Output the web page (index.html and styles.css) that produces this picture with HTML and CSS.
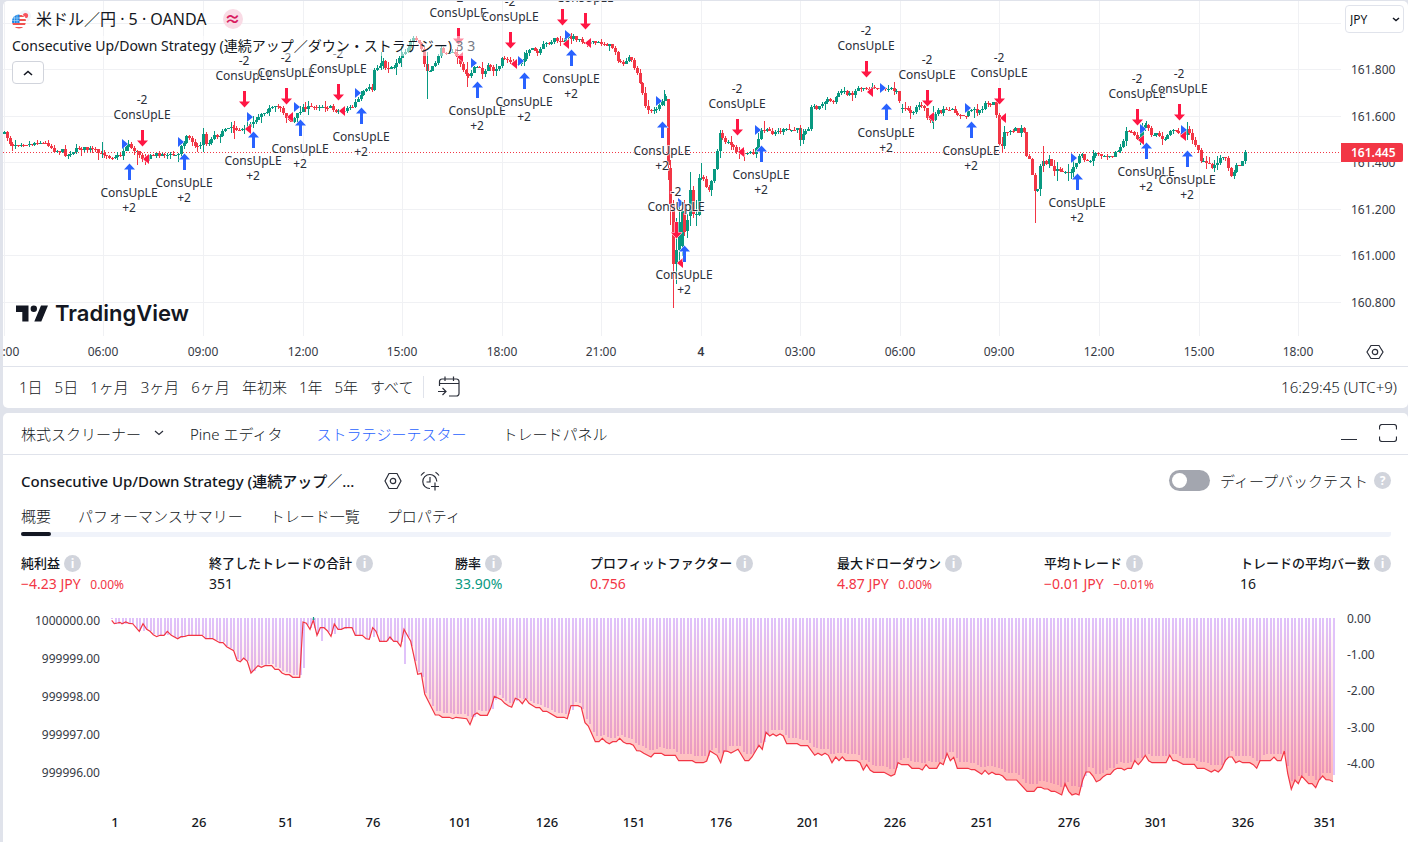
FILE: index.html
```html
<!DOCTYPE html>
<html lang="ja">
<head>
<meta charset="utf-8">
<title>米ドル／円 · 5 · OANDA</title>
<meta name="viewport" content="width=device-width, initial-scale=1">
<link rel="stylesheet" href="styles.css">
</head>
<body>
<main class="app">
  <section class="panel chart-panel">
    <div class="chart">
      <svg class="plot" id="price-plot" viewBox="3 1 1405 365" role="img" aria-label="米ドル／円 5分足"></svg>

      <div class="legend">
        <div class="symbol">
          <svg class="flags" viewBox="0 0 20 20" aria-hidden="true">
            <circle cx="13" cy="7" r="6" fill="#f0f3fa"/>
            <circle cx="13.500" cy="6.500" r="2.600" fill="#f7525f"/>
            <clipPath id="us"><circle cx="7" cy="12.500" r="7"/></clipPath>
            <circle cx="7" cy="12.500" r="7.600" fill="#fff"/>
            <g clip-path="url(#us)">
              <path fill="#fff" d="M0 5h15v15H0z"/>
              <path fill="#ef5350" d="M7 6h8v2H7zM7 10h8v2H7zM0 14h15v2H0zM0 18h15v2H0z"/>
              <path fill="#1e88e5" d="M0 5h7.500v9H0z"/>
              <path stroke="#bbdefb" stroke-width=".6" d="M2.500 6v8M5 6v8M0 9h7M0 11.500h7"/>
            </g>
          </svg>
          <h1 class="symbol-name">米ドル／円 · 5 · OANDA</h1>
          <span class="approx">≈</span>
        </div>
        <div class="study">Consecutive Up/Down Strategy (連続アップ／ダウン・ストラテジー) <span class="study-args">3 3</span></div>
        <button class="collapse" type="button" aria-label="閉じる">
          <svg viewBox="0 0 10 6" width="10" height="6" aria-hidden="true"><path d="M1 5l4-3.500L9 5" fill="none" stroke="#131722" stroke-width="1.600"/></svg>
        </button>
      </div>

      <div class="currency">
        <select aria-label="通貨"><option>JPY</option></select>
        <svg viewBox="0 0 8 5" width="8" height="5" aria-hidden="true"><path d="M1 1l3 2.500L7 1" fill="none" stroke="#131722" stroke-width="1.500"/></svg>
      </div>

      <a class="brand" href="#">
        <svg viewBox="0 0 32 17" width="32" height="17" aria-hidden="true"><path fill="#131722" d="M0 .5h12.500v16H6.300V7H0zM32 .5l-6.700 16h-7L25 .5zM17.800 .5a3.200 3.200 0 1 1 0 6.400 3.200 3.200 0 0 1 0-6.400z"/></svg>
        <span>TradingView</span>
      </a>

      <button class="icon-button axis-settings" type="button" aria-label="スケール設定">
        <svg viewBox="0 0 18 18" width="18" height="18" aria-hidden="true"><path d="M5 2.500h8L17 9l-4 6.500H5L1 9z" class="line"/><circle cx="9" cy="9" r="2.700" class="line"/></svg>
      </button>
    </div>

    <div class="range-bar">
      <div class="ranges">
        <button type="button">1日</button>
        <button type="button">5日</button>
        <button type="button">1ヶ月</button>
        <button type="button">3ヶ月</button>
        <button type="button">6ヶ月</button>
        <button type="button">年初来</button>
        <button type="button">1年</button>
        <button type="button">5年</button>
        <button type="button">すべて</button>
      </div>
      <button class="icon-button goto" type="button" aria-label="日付へ移動">
        <svg viewBox="0 0 22 22" width="22" height="22" aria-hidden="true"><path class="line" d="M1.500 10V5.500a2.500 2.500 0 0 1 2.500-2.500h14.500A2.500 2.500 0 0 1 21 5.500v12a2.500 2.500 0 0 1-2.500 2.500H11M1.500 7.500H21M7 .5V5M15.500 .5V5M0 15.500h7.500M4.500 12l3.500 3.500L4.500 19"/></svg>
      </button>
      <time class="clock">16:29:45 (UTC+9)</time>
    </div>
  </section>

  <section class="panel tester">
    <nav class="dock">
      <button class="dock-tab screener" type="button">株式スクリーナー
        <svg viewBox="0 0 10 6" width="10" height="6" aria-hidden="true"><path d="M1 1l4 3.500L9 1" class="line"/></svg>
      </button>
      <button class="dock-tab pine" type="button">Pine エディタ</button>
      <button class="dock-tab strategy active" type="button">ストラテジーテスター</button>
      <button class="dock-tab" type="button">トレードパネル</button>
      <div class="window-actions">
        <button class="icon-button" type="button" aria-label="最小化"><svg viewBox="0 0 18 18" width="18" height="18" aria-hidden="true"><path class="line" d="M1 15.500h16"/></svg></button>
        <button class="icon-button" type="button" aria-label="最大化"><svg viewBox="0 0 18 18" width="18" height="18" aria-hidden="true"><path class="line" d="M.5 5.500V3A2.500 2.500 0 0 1 3 .5h12A2.500 2.500 0 0 1 17.500 3v2.500M.5 12.500V15A2.500 2.500 0 0 0 3 17.500h12a2.500 2.500 0 0 0 2.500-2.500v-2.500"/></svg></button>
      </div>
    </nav>

    <header class="tester-head">
      <h2>Consecutive Up/Down Strategy (連続アップ／...</h2>
      <button class="icon-button" type="button" aria-label="設定">
        <svg viewBox="0 0 18 18" width="18" height="18" aria-hidden="true"><path d="M5 1.500h8L17 9l-4 7.500H5L1 9z" class="line"/><circle cx="9" cy="9" r="2.700" class="line"/></svg>
      </button>
      <button class="icon-button" type="button" aria-label="アラートを追加">
        <svg viewBox="0 0 20 20" width="20" height="20" aria-hidden="true"><path class="line" d="M16.800 10.500A7 7 0 1 0 10 17.500M10 6v5H6.500M1 4.500C2 3 3 2 4.500 1.200M19 4.500c-1-1.500-2-2.500-3.500-3.300M15 11.500v8M11 15.500h8"/></svg>
      </button>
      <div class="deep">
        <input class="toggle" type="checkbox" id="deep-test">
        <label for="deep-test">ディープバックテスト</label>
        <span class="badge">?</span>
      </div>
    </header>

    <nav class="views">
      <button class="active" type="button">概要</button>
      <button type="button">パフォーマンスサマリー</button>
      <button type="button">トレード一覧</button>
      <button type="button">プロパティ</button>
    </nav>

    <dl class="metrics">
      <div><dt>純利益 <span class="badge">i</span></dt><dd class="down">−4.23 JPY <small>0.00%</small></dd></div>
      <div><dt>終了したトレードの合計 <span class="badge">i</span></dt><dd>351</dd></div>
      <div><dt>勝率 <span class="badge">i</span></dt><dd class="up">33.90%</dd></div>
      <div><dt>プロフィットファクター <span class="badge">i</span></dt><dd class="down">0.756</dd></div>
      <div><dt>最大ドローダウン <span class="badge">i</span></dt><dd class="down">4.87 JPY <small>0.00%</small></dd></div>
      <div><dt>平均トレード <span class="badge">i</span></dt><dd class="down">−0.01 JPY <small>−0.01%</small></dd></div>
      <div><dt>トレードの平均バー数 <span class="badge">i</span></dt><dd>16</dd></div>
    </dl>

    <svg class="plot" id="equity-plot" viewBox="3 600 1405 242" role="img" aria-label="資産曲線とドローダウン"></svg>
  </section>
</main>
<script src="charts.js"></script>
</body>
</html>
```
FILE: styles.css
```css
* {
  box-sizing: border-box;
}

body {
  margin: 0;
  background: #e0e3eb;
  color: #131722;
  font-family: "Noto Sans", "Noto Sans CJK JP", sans-serif;
  font-size: 14px;
}

button {
  padding: 0;
  border: 0;
  background: none;
  color: inherit;
  font: inherit;
  white-space: nowrap;
  cursor: pointer;
}

.app {
  display: flex;
  flex-direction: column;
  gap: 5px;
  min-height: 100vh;
  padding: 1px 0 0 3px;
}

.panel {
  background: #fff;
  border-radius: 5px;
  overflow: hidden;
}

.tester {
  flex: 1;
  border-radius: 5px 5px 0 0;
}

.plot {
  display: block;
  width: 100%;
  height: auto;
}

.line {
  fill: none;
  stroke: #2a2e39;
  stroke-width: 1.2px;
}

.icon-button {
  display: flex;
  align-items: center;
}

/* price chart */

.chart {
  position: relative;
  border-bottom: 1px solid #e0e3eb;
}

.legend {
  position: absolute;
  top: 7px;
  left: 9px;
}

.symbol {
  display: flex;
  align-items: center;
  height: 22px;
}

.flags {
  width: 20px;
  height: 20px;
}

.symbol-name {
  margin: 0 16px 0 4px;
  font-size: 16px;
  font-weight: 400;
  line-height: 22px;
}

.approx {
  width: 20px;
  height: 20px;
  border-radius: 50%;
  background: #f9dbe5;
  color: #d81b60;
  font-size: 16px;
  font-weight: 700;
  line-height: 20px;
  text-align: center;
}

.study {
  margin-top: 6px;
  padding-right: 4px;
  background: rgb(255 255 255 / 50%);
  font-size: 14px;
  line-height: 20px;
  white-space: nowrap;
}

.study-args {
  color: #787b86;
}

.collapse {
  display: flex;
  align-items: center;
  justify-content: center;
  width: 32px;
  height: 23px;
  margin-top: 5px;
  border: 1px solid #d1d4dc;
  border-radius: 4px;
  background: #fff;
}

.currency {
  position: absolute;
  top: 4px;
  right: 4px;
  display: grid;
  align-items: center;
  width: 59px;
  height: 28px;
}

.currency > * {
  grid-area: 1 / 1;
}

.currency svg {
  justify-self: end;
  margin-right: 4px;
  pointer-events: none;
}

.currency select {
  appearance: none;
  width: 100%;
  height: 100%;
  padding: 0 4px;
  border: 1px solid #e0e3eb;
  border-radius: 4px;
  background: #fff;
  color: #131722;
  font-family: inherit;
  font-size: 12px;
}

.brand {
  position: absolute;
  bottom: 40px;
  left: 13px;
  display: flex;
  align-items: center;
  gap: 7px;
  color: #131722;
  font-family: Inter, sans-serif;
  font-size: 22px;
  font-weight: 600;
  line-height: 26px;
  text-decoration: none;
}

.axis-settings {
  position: absolute;
  right: 24px;
  bottom: 5px;
}

.grid {
  stroke: #f0f1f4;
}

.price-line {
  stroke: #f23645;
  stroke-dasharray: 1 2;
}

.axis {
  fill: #363a45;
  font-size: 12px;
}

.middle {
  text-anchor: middle;
}

.end {
  text-anchor: end;
}

.strong {
  font-weight: 600;
}

.tag {
  fill: #f23645;
}

.tag-text {
  fill: #fff;
  font-size: 12px;
  font-weight: 600;
}

.rise {
  fill: #089981;
}

.fall {
  fill: #f23645;
}

.buy {
  fill: #2962ff;
}

.sell {
  fill: #ff1744;
}

.marker {
  stroke: #fff;
  stroke-width: 1px;
  paint-order: stroke;
}

.order {
  fill: #2a2e39;
  stroke: rgb(255 255 255 / 70%);
  stroke-width: 2px;
  paint-order: stroke;
  font-size: 12px;
  text-anchor: middle;
}

/* date ranges */

.range-bar {
  display: flex;
  align-items: center;
  height: 41px;
  padding: 0 11px 2px 16px;
}

.ranges {
  display: flex;
  gap: 13px;
  padding-right: 11px;
  border-right: 1px solid #e0e3eb;
  font-size: 15px;
  font-weight: 300;
  line-height: 22px;
}

.ranges button {
  font-size: 15px;
  margin-right: -1px;
}

.goto {
  margin-left: 14px;
}

.clock {
  margin-left: auto;
  font-size: 15px;
  font-weight: 300;
}

/* strategy tester */

.dock {
  display: flex;
  align-items: center;
  height: 42px;
  padding: 0 11px 1px 18px;
  border-bottom: 1px solid #e0e3eb;
  font-size: 15px;
  font-weight: 300;
}

.screener {
  display: flex;
  align-items: center;
  gap: 13px;
  margin-right: 26px;
}

.pine {
  margin-right: 34px;
}

.strategy {
  margin-right: 36px;
}

.dock .active {
  color: #2962ff;
}

.window-actions {
  display: flex;
  gap: 21px;
  margin-left: auto;
}

.tester-head {
  display: flex;
  align-items: center;
  gap: 18px;
  height: 51px;
  padding: 0 17px 0 18px;
}

.tester-head h2 {
  margin: 0 12px 0 0;
  font-size: 15px;
  font-weight: 500;
  white-space: nowrap;
}

.deep {
  display: flex;
  align-items: center;
  margin-left: auto;
  font-size: 15px;
  font-weight: 300;
  white-space: nowrap;
}

.deep label {
  margin: 0 6px 0 10px;
}

.toggle {
  appearance: none;
  display: flex;
  align-items: center;
  width: 41px;
  height: 21px;
  margin: 0;
  padding: 3px;
  border-radius: 11px;
  background: #a3a6af;
}

.toggle::before {
  content: "";
  width: 15px;
  height: 15px;
  border-radius: 50%;
  background: #fff;
}

.toggle:checked {
  justify-content: flex-end;
  background: #2962ff;
}

.badge {
  flex: none;
  width: 17px;
  height: 17px;
  border-radius: 50%;
  background: #d1d4dc;
  color: #fff;
  font-size: 12px;
  font-weight: 700;
  line-height: 17px;
  text-align: center;
}

.views {
  display: flex;
  gap: 27px;
  margin: 0 17px 0 18px;
  border-radius: 3px;
  background: linear-gradient(#f0f3fa, #f0f3fa) bottom / 100% 5px no-repeat;
  font-size: 15px;
  font-weight: 300;
}

.views button {
  position: relative;
  padding-bottom: 11px;
  line-height: 20px;
}

.views .active::after {
  content: "";
  position: absolute;
  right: 0;
  bottom: 1px;
  left: 0;
  height: 4px;
  border-radius: 2px;
  background: #131722;
}

.metrics {
  display: grid;
  grid-template-columns: 188fr 246fr 135fr 247fr 207fr 196fr 151fr;
  margin: 0 17px 0 18px;
  padding: 16px 0 4px;
  white-space: nowrap;
}

.metrics dt {
  display: flex;
  align-items: center;
  gap: 4px;
  font-size: 13px;
  font-weight: 500;
  line-height: 20px;
}

.metrics dd {
  margin: 0;
  font-size: 14px;
  line-height: 22px;
}

.metrics small {
  margin-left: 6px;
  font-size: 12px;
}

.metrics .down {
  color: #f23645;
}

.metrics .up {
  color: #089981;
}

.drawdown {
  fill: #e0c2fa;
}

.equity {
  fill: none;
  stroke: #f23645;
  stroke-width: 1.2px;
}

.equity-peak {
  fill: none;
  stroke: #089981;
}

.trade {
  fill: #131722;
  font-size: 13px;
  font-weight: 500;
  text-anchor: middle;
}
```
FILE: charts.js
```js
const NS = 'http://www.w3.org/2000/svg';

function add(parent, name, attrs, text) {
  const el = document.createElementNS(NS, name);
  for (const key in attrs) el.setAttribute(key, attrs[key]);
  if (text !== undefined) el.textContent = text;
  parent.appendChild(el);
  return el;
}

function pairs(source) {
  return source.trim().split(/\s+/).map(p => p.split(',').map(Number));
}

function interpolate(points, x) {
  let i = 1;
  while (i < points.length - 1 && points[i][0] < x) i++;
  const [x0, y0] = points[i - 1];
  const [x1, y1] = points[i];
  const t = Math.min(1, Math.max(0, (x - x0) / (x1 - x0)));
  return y0 + (y1 - y0) * t;
}

/* ---- price chart ---- */

const closes = pairs(`
3,133 5,134 7,138 9,143 12,145 20,143 26,144 32,144 38,141 42,143 48,144 52,148 54,151 63,151 66,156 72,151 80,148
85,149 90,149 97,152 100,156 102,153 110,157 120,156 124,148 128,144 132,149 138,153 142,158 146,159 152,156 158,154
164,154 170,155 178,155 181,145 186,137 190,138 196,148 201,143 203,135 207,146 212,136 222,134 226,126 232,127 238,128
243,132 248,125 256,118 262,112 270,109 280,107 286,117 292,122 297,114 302,107 310,108 318,106 328,107 334,110 342,112
346,108 352,107 357,100 364,92 369,88 372,90 374,70 378,67 382,61 386,68 395,66 400,55 405,50 413,40 420,45 423,55
425,71 431,71 434,65 440,50 450,52 458,57 463,72 468,76 472,70 477,67 482,73 488,65 494,74 499,65 502,57 510,63 516,65
522,60 526,53 532,50 538,54 544,44 550,42 554,38 560,43 566,38 572,37 578,39 586,42 593,43 602,43 610,46 614,49 617,58
622,66 627,58 632,62 636,72 640,84 645,104 650,113 656,108 661,103 665,97`);

const closesNight = pairs(`
703,177 706,190 709,190 712,176 714,168 717,150 720,132 724,141 728,141 732,146 736,153 740,152 743,158 748,152 753,154
757,146 760,131 764,130 772,132 780,131 790,130 797,130 800,139 803,131 808,127 810,109 813,107 820,107 826,99 834,102
838,93 843,90 850,95 858,88 868,88 871,86 880,88 888,88 896,91 898,91 900,109 906,107 912,113 918,104 924,109 928,120
932,120 936,113 942,111 955,111 958,115 964,118 970,109 978,111 985,105 993,103 996,113 998,143 1001,150 1004,131
1008,133 1014,129 1019,132 1023,125 1027,163 1031,159 1033,192 1037,193 1039,172 1042,161 1046,166 1049,159 1054,172
1060,169 1067,174 1073,169 1077,159 1082,155 1087,163 1092,157 1097,153 1103,155 1112,155 1119,150 1124,140 1127,129
1133,134 1138,140 1144,125 1147,127 1150,135 1158,134 1163,140 1170,130 1175,132 1182,135 1187,130 1192,138 1198,150
1201,162 1206,163 1212,168 1218,161 1224,153 1228,169 1231,174 1236,168 1242,160 1244,151 1247,151`);

/* x, open, close, high, low for the fast part of the session */
const spike = [
  [668, 99, 165, 99, 180], [670, 168, 204, 160, 225], [673, 204, 264, 200, 308], [676, 264, 250, 218, 284],
  [679, 250, 222, 205, 262], [682, 246, 211, 208, 256], [684, 213, 232, 200, 236], [687, 231, 220, 214, 238],
  [690, 216, 190, 172, 226], [693, 190, 214, 186, 218], [696, 215, 214, 200, 226], [699, 215, 178, 174, 216]
];

/* x, high, low */
const longWicks = [
  [102, 142, 158], [203, 131, 152], [234, 121, 139], [137, 150, 165], [427, 52, 99], [467, 62, 87], [381, 52, 70],
  [401, 46, 67], [701, 163, 180], [764, 121, 133], [800, 128, 146], [933, 106, 129], [1035, 184, 223],
  [1043, 146, 172], [1057, 162, 181], [1162, 132, 145], [1146, 121, 128], [664, 90, 106], [1068, 164, 181]
];

const buys = pairs(`
129,164 184,154 253,132 300,120 361,108 477,82 524,73 571,50 662,122 684,246 761,146 886,104 971,122 1077,174 1146,143 1187,151`);
const sells = pairs(`
142,146 244,107 286,104 338,100 458,44 510,48 562,25 585,29 676,238 737,135 866,77 927,106 999,104 1137,125 1179,120`);
const entries = pairs(`
122,144 178,142 247,117 294,107 355,93 471,63 518,61 565,35 656,101 678,203 755,130 880,88 965,108 1071,158 1140,129 1181,130`);
const exits = pairs(`
149,159 251,129 293,117 345,111 463,57 517,64 569,44 591,43 683,263 744,152 873,92 934,117 1006,118 1144,140 1186,136`);

function drawPrice() {
  const svg = document.getElementById('price-plot');
  const verticals = [4, 103, 203, 303, 402, 502, 601, 701, 800, 900, 999, 1099, 1199, 1298];
  const times = ['03:00', '06:00', '09:00', '12:00', '15:00', '18:00', '21:00', '4', '03:00', '06:00', '09:00', '12:00', '15:00', '18:00'];
  const levels = [23, 69, 116, 162, 209, 255, 302];
  const prices = ['', '161.800', '161.600', '161.400', '161.200', '161.000', '160.800'];

  verticals.forEach((x, i) => {
    add(svg, 'line', { class: 'grid', x1: x + .5, x2: x + .5, y1: 1, y2: 336 });
    add(svg, 'text', { class: times[i] === '4' ? 'axis middle strong' : 'axis middle', x, y: 356 }, times[i]);
  });
  levels.forEach((y, i) => {
    add(svg, 'line', { class: 'grid', x1: 3, x2: 1341, y1: y + .5, y2: y + .5 });
    if (prices[i]) add(svg, 'text', { class: 'axis', x: 1351, y: y + 5 }, prices[i]);
  });
  add(svg, 'line', { class: 'price-line', x1: 3, x2: 1341, y1: 152.5, y2: 152.5 });

  const candles = add(svg, 'g', { 'shape-rendering': 'crispEdges' });
  function candle(x, open, close, high, low) {
    const cls = close <= open ? 'rise' : 'fall';
    const left = Math.round(x);
    const top = Math.round(Math.min(open, close));
    const bottom = Math.max(top + 1, Math.round(Math.max(open, close)));
    add(candles, 'rect', { class: cls, x: left, y: Math.round(high), width: 1, height: Math.max(1, Math.round(low - high)) });
    add(candles, 'rect', { class: cls, x: left - 1, y: top, width: 3, height: bottom - top });
  }

  let seed = 7;
  const random = () => (seed = (seed * 16807) % 2147483647) / 2147483647;
  function series(points, from, to) {
    let open = interpolate(points, from);
    for (let x = from; x <= to; x += 2.764) {
      const close = interpolate(points, x) + (random() - .5) * 4;
      const reach = random() < .25 ? 7 : 3;
      candle(x, open, close, Math.min(open, close) - random() * reach, Math.max(open, close) + random() * reach);
      open = Math.abs(x - 899) < 2 ? 109 : close;
    }
  }
  series(closes, 4, 666);
  spike.forEach(c => candle(...c));
  series(closesNight, 703, 1247);
  longWicks.forEach(([x, high, low]) => {
    const rising = [102, 203, 427, 381, 401, 701, 800, 933, 1057, 1146, 664, 1068].includes(x);
    add(candles, 'rect', { class: rising ? 'rise' : 'fall', x, y: high, width: 1, height: low - high });
  });

  const marks = add(svg, 'g', { class: 'marker' });
  entries.forEach(([x, y]) => add(marks, 'path', { class: 'buy', d: `M${x} ${y - 5}v10l6-5z` }));
  exits.forEach(([x, y]) => add(marks, 'path', { class: 'sell', d: `M${x} ${y - 5}v10l-6-5z` }));
  buys.forEach(([x, y]) => {
    add(marks, 'path', { class: 'buy', d: `M${x + .5} ${y - .5}l5.500 6h-4v10.500h-3v-10.500h-4z` });
    add(svg, 'text', { class: 'order', x, y: y + 33 }, 'ConsUpLE');
    add(svg, 'text', { class: 'order', x, y: y + 48 }, '+2');
  });
  sells.forEach(([x, y]) => {
    add(marks, 'path', { class: 'sell', d: `M${x + .5} ${y + .5}l5.500-6h-4v-10.500h-3v10.500h-4z` });
    add(svg, 'text', { class: 'order', x, y: y - 27 }, 'ConsUpLE');
    add(svg, 'text', { class: 'order', x, y: y - 42 }, '-2');
  });

  add(svg, 'path', { class: 'tag', d: 'M1341 143h60a2 2 0 0 1 2 2v15a2 2 0 0 1-2 2h-60z' });
  add(svg, 'text', { class: 'tag-text', x: 1351, y: 157 }, '161.445');
}

/* ---- equity and drawdown, in thirds of a pixel below y = 600 ---- */

const equity = pairs(`
335,61 343,71 352,69 360,67 366,71 377,66 387,70 398,71 418,94 429,71 440,88 450,94 460,104 470,110 480,106 492,106
502,94 514,106 533,116 543,110 555,109 565,106 606,106 617,116 638,116 659,128 669,128 680,140 701,152 711,181 721,185
731,174 742,184 753,219 774,197 784,202 795,197 815,197 825,208 836,208 846,219 857,224 868,224 878,232 899,232 909,66
919,70 930,88 940,60 951,106 961,83 972,83 982,92 993,109 1003,72 1014,88 1024,88 1035,83 1056,83 1066,106 1087,106
1098,116 1108,118 1118,83 1128,94 1139,124 1160,124 1170,111 1181,124 1191,124 1202,139 1212,88 1222,106 1232,124
1242,170 1253,223 1264,220 1274,282 1306,345 1317,345 1327,352 1348,352 1358,356 1368,352 1400,356 1410,374 1421,345
1431,339 1441,346 1462,346 1472,325 1483,289 1504,299 1514,310 1525,317 1535,322 1546,295 1556,299 1567,311 1577,296
1587,310 1608,323 1619,323 1629,334 1640,334 1671,352 1692,352 1702,356 1713,317 1734,317 1744,322 1755,368 1765,378
1786,425 1797,425 1807,415 1818,426 1828,431 1838,425 1849,425 1859,415 1870,426 1880,431 1890,431 1900,436 1910,452
1921,453 1931,460 1953,471 1963,460 1984,460 1994,466 2026,466 2036,482 2077,482 2087,488 2110,488 2120,483 2130,453
2151,466 2162,488 2172,453 2183,454 2193,459 2203,454 2214,448 2235,482 2246,482 2256,471 2277,436 2287,448 2298,397
2309,408 2319,402 2329,408 2340,402 2350,408 2360,431 2392,431 2402,437 2423,437 2444,466 2454,460 2465,466 2475,460
2485,466 2496,488 2507,471 2517,482 2527,471 2537,482 2570,482 2580,488 2590,510 2600,494 2611,511 2621,517 2652,517
2673,528 2684,523 2694,488 2705,494 2725,494 2736,505 2757,505 2767,510 2778,494 2788,505 2810,505 2820,488 2830,494
2841,460 2851,482 2861,472 2872,505 2904,505 2914,509 2924,509 2945,523 2955,511 2966,523 2976,517 2987,523 2997,523
3008,528 3019,540 3050,540 3081,574 3102,574 3112,562 3123,562 3133,567 3143,567 3154,574 3164,574 3185,585 3195,551
3206,574 3216,585 3227,581 3237,585 3248,540 3258,516 3269,516 3279,528 3289,545 3300,540 3310,530 3321,523 3331,523
3342,510 3352,505 3364,505 3373,510 3383,505 3394,505 3404,482 3415,494 3425,482 3436,466 3446,482 3456,488 3498,488
3509,466 3519,482 3529,482 3550,493 3583,493 3592,505 3612,505 3634,516 3644,510 3655,516 3665,505 3676,482 3686,471
3696,471 3707,488 3718,483 3728,488 3749,488 3760,494 3770,505 3780,482 3811,482 3822,471 3832,482 3843,482 3853,453
3863,520 3874,568 3885,540 3895,551 3905,528 3926,551 3936,551 3947,563 3957,540 3968,528 3978,539 3989,540 3999,545`);

function drawEquity() {
  const svg = document.getElementById('equity-plot');
  const defs = add(svg, 'defs', {});
  const fade = add(defs, 'linearGradient', { id: 'loss', gradientUnits: 'userSpaceOnUse', x1: 0, x2: 0, y1: 620, y2: 796 });
  add(fade, 'stop', { offset: 0, 'stop-color': '#ff5252', 'stop-opacity': 0 });
  add(fade, 'stop', { offset: 1, 'stop-color': '#ff5252', 'stop-opacity': .46 });

  const bars = add(svg, 'g', { class: 'drawdown', 'shape-rendering': 'crispEdges' });
  const step = (3999 - 335) / 350;
  let previous = 61;
  for (let i = 0; i <= 350; i++) {
    const value = interpolate(equity, 335 + i * step);
    let depth = (Math.max(value, previous) - 61) / 114.3 * 109 + 8;
    if (i === 0) depth = 3;
    if (i === 84) depth = 137;
    if (i === 60) depth = 69;
    add(bars, 'rect', { x: Math.floor((335 + i * step) / 3), y: 618, width: 2, height: Math.max(1, Math.round(depth / 3)) });
    previous = value;
  }

  const line = equity.map(([x, y]) => `${(x / 3).toFixed(1)} ${(600 + y / 3).toFixed(1)}`).join('L');
  add(svg, 'path', { fill: 'url(#loss)', d: `M111.700 620L${line}L1333 620z` });
  add(svg, 'path', { class: 'equity', d: `M${line}` });
  add(svg, 'path', { class: 'equity-peak', d: 'M313 620l.5-3 .5 3' });

  [621, 659, 697, 735, 773].forEach((y, i) =>
    add(svg, 'text', { class: 'axis end', x: 100, y: y + 4 }, (1000000 - i).toFixed(2)));
  [619, 655, 691, 728, 764].forEach((y, i) =>
    add(svg, 'text', { class: 'axis', x: 1347, y: y + 4 }, i ? `-${i}.00` : '0.00'));
  [115, 199, 286, 373, 460, 547, 634, 721, 808, 895, 982, 1069, 1156, 1243, 1325].forEach((x, i) =>
    add(svg, 'text', { class: 'trade', x, y: 827 }, 1 + i * 25));
}

drawPrice();
drawEquity();
```
